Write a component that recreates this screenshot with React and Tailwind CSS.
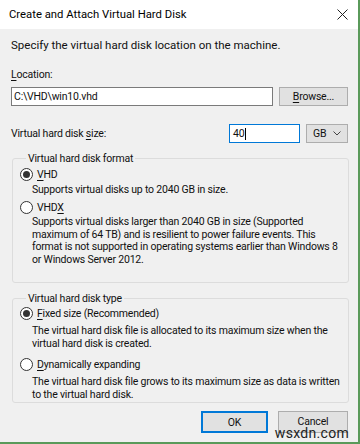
import React from 'react'

function U({ children }) {
    return <span className="underline underline-offset-[2px] decoration-[1px]">{children}</span>
}

function Radio({ checked, children }) {
    return (
        <div className="flex items-center gap-[4px] h-[16px]">
            <span className="w-[13px] h-[13px] rounded-full border border-[#333] bg-white flex items-center justify-center shrink-0">
                {checked && <span className="w-[7px] h-[7px] rounded-full bg-[#333]" />}
            </span>
            <span>{children}</span>
        </div>
    )
}

function Group({ title, children, className = '' }) {
    return (
        <fieldset className={`border border-[#dcdcdc] rounded-[3px] ml-[1px] -mr-[1px] pl-[7px] pr-[6px] ${className}`}>
            <legend className="ml-[6px] px-[2px] leading-[15px]">{title}</legend>
            {children}
        </fieldset>
    )
}

export default function App() {
    return (
        <div className="w-[360px] h-[444px] relative overflow-hidden flex flex-col bg-[#f0f0f0] border-r-2 border-b-2 border-[#5a9a5a] text-[10.5px] leading-[15px] tracking-[-0.2px] text-[#111] font-['Roboto','Liberation_Sans',Arial,sans-serif]">
            {/* title bar */}
            <div className="h-[29px] bg-white flex items-center justify-between pl-[9px] pr-[9px] shrink-0">
                <span className="text-[11.3px] tracking-normal text-black">Create and Attach Virtual Hard Disk</span>
                <svg width="11" height="11" viewBox="0 0 11 11" className="mr-[1px]">
                    <path d="M0.5 0.5 L10.5 10.5 M10.5 0.5 L0.5 10.5" stroke="#222" strokeWidth="1" fill="none" />
                </svg>
            </div>

            <div className="flex flex-col pl-[11px] pr-[10px] pt-[9px] whitespace-nowrap">
                <p className="text-[11.5px] tracking-normal">Specify the virtual hard disk location on the machine.</p>
                <p className="mt-[14px]"><U>L</U>ocation:</p>

                <div className="mt-[5px] flex gap-[6px] h-[19px]">
                    <div className="flex-1 border border-[#7a7a7a] bg-white px-[2px] flex items-center">C:\VHD\win10.vhd</div>
                    <div className="w-[69px] border border-[#adadad] bg-[#e1e1e1] flex items-center justify-center"><U>B</U>rowse...</div>
                </div>

                <div className="mt-[18px] flex items-center h-[19px]">
                    <span className="flex-1">Virtual hard disk <U>s</U>ize:</span>
                    <div className="w-[71px] h-full border border-[#0078d7] bg-white px-[3px] flex items-center">
                        40<span className="w-px h-[12px] bg-black ml-px" />
                    </div>
                    <div className="w-[42px] h-full ml-[6px] border border-[#adadad] bg-[#e1e1e1] flex items-center justify-between pl-[6px] pr-[6px]">
                        <span>GB</span>
                        <svg width="8" height="5" viewBox="0 0 8 5">
                            <path d="M0.5 0.5 L4 4 L7.5 0.5" stroke="#444" strokeWidth="1" fill="none" />
                        </svg>
                    </div>
                </div>

                <Group title="Virtual hard disk format" className="mt-[8px] h-[132px]">
                    <Radio checked><U>V</U>HD</Radio>
                    <p className="pl-[12px] mt-[1px] leading-[14px]">Supports virtual disks up to 2040 GB in size.</p>
                    <div className="mt-[2px]">
                        <Radio>VHD<U>X</U></Radio>
                    </div>
                    <p className="pl-[12px] mt-[1px] leading-[12.5px]">
                        Supports virtual disks larger than 2040 GB in size (Supported<br />
                        maximum of 64 TB) and is resilient to power failure events. This<br />
                        format is not supported in operating systems earlier than Windows 8<br />
                        or Windows Server 2012.
                    </p>
                </Group>

                <Group title="Virtual hard disk type" className="mt-[8px] h-[112px]">
                    <div className="-mt-[1px]">
                        <Radio checked><U>F</U>ixed size (Recommended)</Radio>
                    </div>
                    <p className="pl-[12px] mt-[4px] leading-[12.5px]">
                        The virtual hard disk file is allocated to its maximum size when the<br />
                        virtual hard disk is created.
                    </p>
                    <div className="mt-[6px]">
                        <Radio><U>D</U>ynamically expanding</Radio>
                    </div>
                    <p className="pl-[12px] mt-[4px] leading-[12.5px]">
                        The virtual hard disk file grows to its maximum size as data is written<br />
                        to the virtual hard disk.
                    </p>
                </Group>

                <div className="mt-[8px] flex justify-end gap-[10px] h-[22px]">
                    <div className="w-[67px] border-2 border-[#0078d7] bg-[#e1e1e1] flex items-center justify-center">OK</div>
                    <div className="w-[70px] border border-[#adadad] bg-[#e1e1e1] flex items-start justify-center pt-[2px]">Cancel</div>
                </div>
            </div>

            <span className="absolute right-[9px] bottom-[1px] text-[14px] leading-[15px] text-[#222] tracking-[0.3px]">wsxdn.com</span>
        </div>
    )
}
